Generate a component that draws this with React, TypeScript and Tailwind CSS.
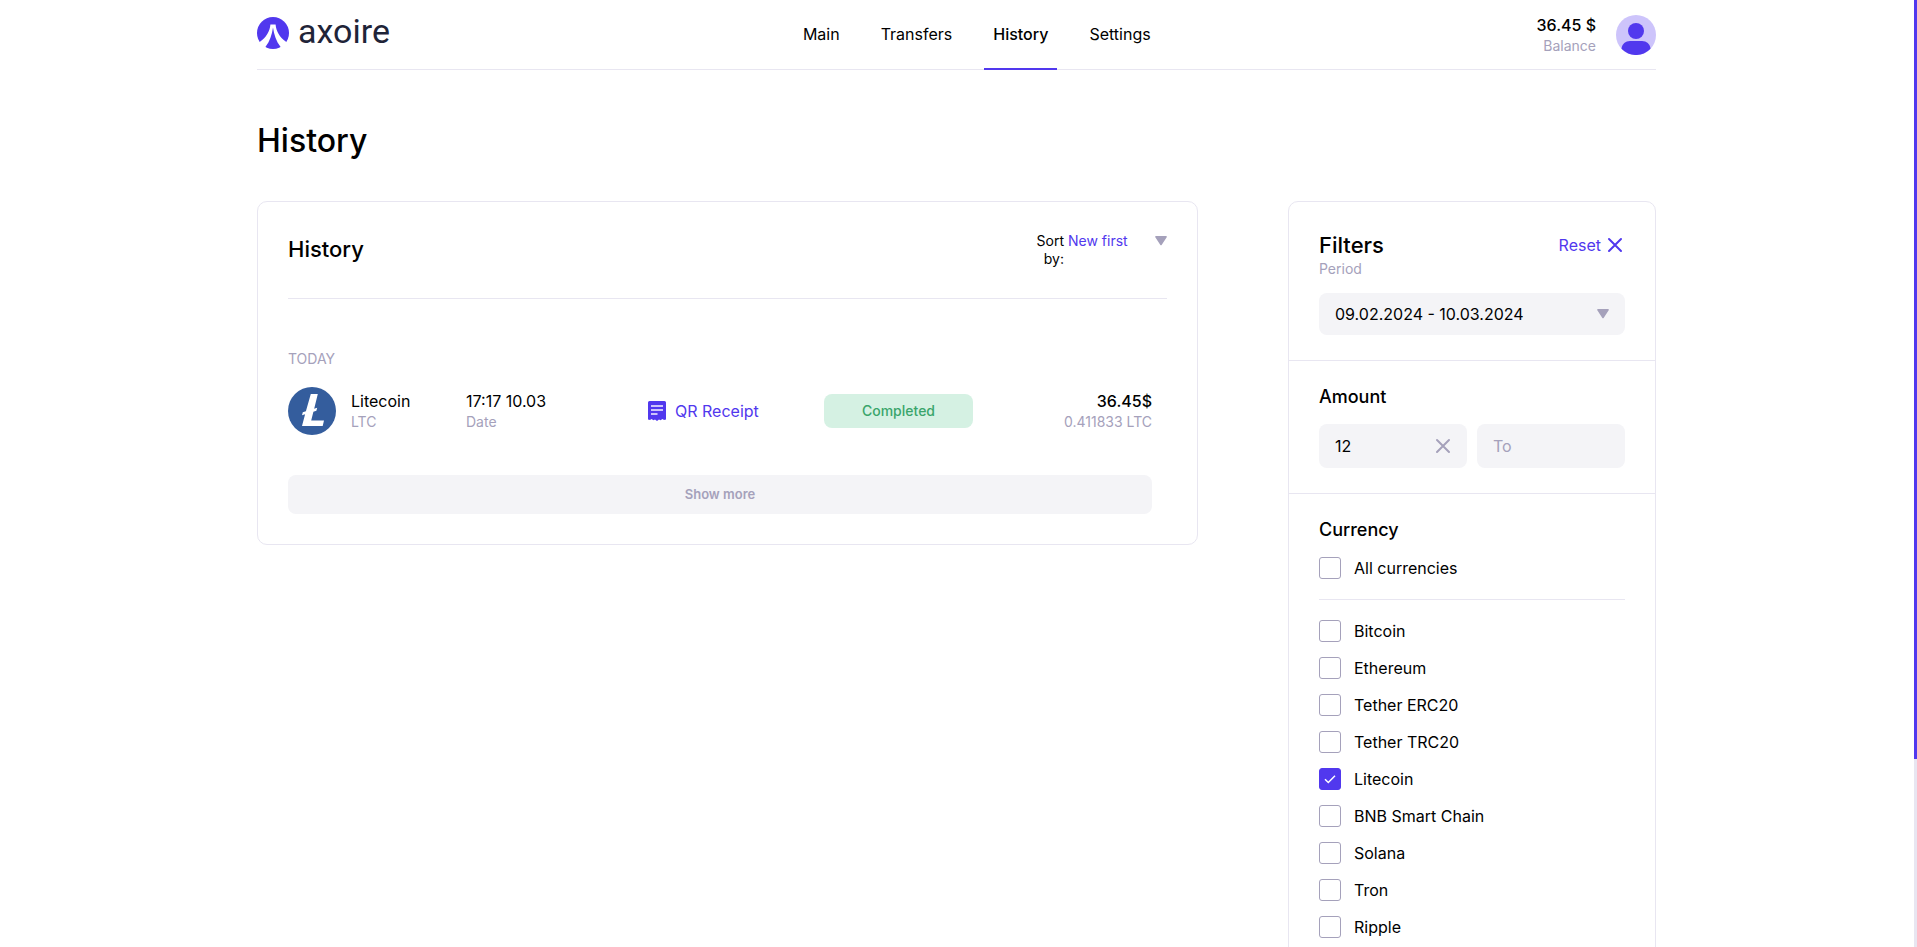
import { useEffect, useRef, useState } from "react";

const NAV = ["Main", "Transfers", "History", "Settings"];

const CURRENCIES = [
  "Bitcoin",
  "Ethereum",
  "Tether ERC20",
  "Tether TRC20",
  "Litecoin",
  "BNB Smart Chain",
  "Solana",
  "Tron",
  "Ripple",
];

function LogoMark() {
  return (
    <svg viewBox="0 0 32 32" className="size-8" aria-hidden="true">
      <circle cx="16" cy="16" r="16" fill="#5138ee" />
      <path
        d="M13.400 7.500h5.200c.5 6.500 4.200 13.300 10.400 17.200l1.500 1.500-6 4.800-1.200-1.600c-4-5-6.300-11.500-7.300-18.900-1 7.400-3.300 13.900-7.300 18.900l-1.200 1.600-6-4.800 1.500-1.500c6.200-3.900 9.900-10.700 10.400-17.200z"
        fill="#fff"
      />
    </svg>
  );
}

function Avatar() {
  return (
    <svg viewBox="0 0 40 40" className="size-10" aria-hidden="true">
      <circle cx="20" cy="20" r="20" fill="#cdc4fb" />
      <circle cx="20" cy="16" r="8" fill="#5138ee" />
      <path d="M5.500 33.800C6 29 9.500 26 14 26h12c4.500 0 8 3 8.500 7.800A20 20 0 0 1 5.500 33.800z" fill="#5138ee" />
    </svg>
  );
}

function LitecoinIcon() {
  return (
    <svg viewBox="0 0 48 48" className="size-12 shrink-0" aria-hidden="true">
      <circle cx="24" cy="24" r="24" fill="#345d9d" />
      <path
        d="M22.800 7h7l-3.600 14.700 3-1-.8 3-3 1.100L23.200 33.500h12.800L34.700 39H14l3.100-11.800-3.100 1.100.8-3 3.100-1.100z"
        fill="#fff"
      />
    </svg>
  );
}

function ReceiptIcon() {
  return (
    <svg viewBox="0 0 18 20" className="h-5 w-[18px]" aria-hidden="true">
      <path
        d="M1.500 0h15A1.500 1.500 0 0 1 18 1.500V18.500l-2 .5-1.500-1-2 1.200-1.500-.7-2 1.500-2-1.500-1.500.7-2-1.200-1.500 1-2-.5V1.500A1.500 1.500 0 0 1 1.500 0z"
        fill="#5138ee"
      />
      <path d="M3 5h12M3 9h12M3 13h6.500" stroke="#cdc4fb" strokeWidth="2" />
    </svg>
  );
}

function Triangle() {
  return (
    <svg viewBox="0 0 12 10" className="pointer-events-none h-[10px] w-3 shrink-0" aria-hidden="true">
      <path d="M1 0h10a.8.800 0 0 1 .7 1.300L6.800 8.700a1 1 0 0 1-1.600 0L.3 1.300A.8.800 0 0 1 1 0z" fill="#a5a1bb" />
    </svg>
  );
}

function Cross() {
  return (
    <svg viewBox="0 0 16 16" className="size-4 shrink-0" fill="none" stroke="currentColor" strokeWidth="2" strokeLinecap="round" aria-hidden="true">
      <path d="M2 2l12 12M14 2L2 14" />
    </svg>
  );
}

function Check({ label, defaultChecked = false }: { label: string; defaultChecked?: boolean }) {
  return (
    <label className="flex items-center gap-[13px] text-base leading-[22px]">
      <span className="grid size-[22px] shrink-0">
        <input
          type="checkbox"
          defaultChecked={defaultChecked}
          className="peer col-start-1 row-start-1 m-0 size-[22px] appearance-none rounded-[3px] border border-[#a5a1bb] bg-white checked:border-[#5138ee] checked:bg-[#5138ee]"
        />
        <svg
          viewBox="0 0 22 22"
          className="pointer-events-none invisible col-start-1 row-start-1 size-[22px] peer-checked:visible"
          fill="none"
          stroke="#fff"
          strokeWidth="1.500"
          aria-hidden="true"
        >
          <path d="M6 11.200l3.300 3.300L16 7.800" />
        </svg>
      </span>
      {label}
    </label>
  );
}

export default function App() {
  const scroller = useRef<HTMLDivElement>(null);
  const [thumb, setThumb] = useState({ top: 0, height: 80 });

  const measure = () => {
    const el = scroller.current;
    if (!el) return;
    setThumb({
      top: (el.scrollTop / el.scrollHeight) * 100,
      height: (el.clientHeight / el.scrollHeight) * 100,
    });
  };

  useEffect(() => {
    measure();
    window.addEventListener("resize", measure);
    return () => window.removeEventListener("resize", measure);
  }, []);

  return (
    <div className="flex h-screen bg-white font-['Inter',sans-serif] text-base text-black">
      <div ref={scroller} onScroll={measure} className="min-w-0 flex-1 overflow-y-auto [scrollbar-width:none]">
        <div className="mx-auto max-w-[1400px] pr-px pb-[212px]">
          <header className="flex h-[70px] justify-between border-b border-[#e8e6f1]">
            <a href="#" className="flex w-40 items-start gap-[9px] pt-[17px]">
              <LogoMark />
              <span className="font-['Roboto',sans-serif] text-[34px] leading-7 text-[#1f2438]">axoire</span>
            </a>
            <nav className="-mb-px flex gap-[23px]">
              {NAV.map((item) => (
                <a
                  key={item}
                  href="#"
                  className={
                    item === "History"
                      ? "border-b-2 border-[#5138ee] px-[9px] pt-[22px] leading-6 font-medium"
                      : "px-[9px] pt-[22px] leading-6"
                  }
                >
                  {item}
                </a>
              ))}
            </nav>
            <div className="flex items-center gap-5">
              <div className="text-right">
                <div className="leading-[22px] font-medium">36.45 $</div>
                <div className="text-sm leading-5 text-[#a5a1bb]">Balance</div>
              </div>
              <Avatar />
            </div>
          </header>

          <h1 className="mt-[51px] text-[32px] leading-10 font-medium">History</h1>

          <div className="mt-10 flex items-start gap-[90px]">
            <main className="min-w-0 flex-1 rounded-[10px] border border-[#e8e6f1] p-[30px]">
              <div className="flex h-[67px] items-start justify-between border-b border-[#e8e6f1]">
                <h2 className="pt-[3px] text-[22px] leading-7 font-medium">History</h2>
                <div className="flex items-start gap-1 text-sm leading-[18px]">
                  <label htmlFor="sort" className="w-9 text-right">
                    Sort by:
                  </label>
                  <div className="flex items-center">
                    <select id="sort" className="h-[18px] w-[87px] appearance-none bg-transparent p-0 leading-[18px] text-[#5138ee]">
                      <option>New first</option>
                    </select>
                    <Triangle />
                  </div>
                </div>
              </div>

              <section className="pt-[50px] pr-[15px]">
                <h3 className="text-sm leading-5 text-[#a5a1bb]">TODAY</h3>
                <div className="mt-[18px] grid grid-cols-[178px_182px_176px_149px_1fr] items-center">
                  <div className="flex items-center gap-[15px]">
                    <LitecoinIcon />
                    <div>
                      <div className="leading-[22px]">Litecoin</div>
                      <div className="text-sm leading-5 text-[#a5a1bb]">LTC</div>
                    </div>
                  </div>
                  <div>
                    <div className="leading-[22px]">17:17 10.03</div>
                    <div className="text-sm leading-5 text-[#a5a1bb]">Date</div>
                  </div>
                  <a href="#" className="flex items-center gap-[9px] text-[#5138ee]">
                    <ReceiptIcon />
                    QR Receipt
                  </a>
                  <div className="rounded-lg bg-[#d5f1e3] text-center text-sm leading-[34px] font-medium text-[#3aa56b]">Completed</div>
                  <div className="text-right">
                    <div className="leading-[22px] font-medium">36.45$</div>
                    <div className="text-sm leading-5 text-[#a5a1bb]">0.411833 LTC</div>
                  </div>
                </div>
                <button type="button" className="mt-10 block h-[39px] w-full rounded-lg bg-[#f4f4f7] text-[13px] font-semibold text-[#a5a1bb]">
                  Show more
                </button>
              </section>
            </main>

            <aside className="w-[368px] shrink-0 rounded-[10px] border border-[#e8e6f1]">
              <div className="border-b border-[#e8e6f1] px-[30px] pt-[29px] pb-[25px]">
                <div className="flex items-center justify-between">
                  <h2 className="text-[22px] leading-7 font-medium">Filters</h2>
                  <button type="button" className="flex items-center gap-[6px] pr-[2px] text-[#5138ee]">
                    Reset
                    <Cross />
                  </button>
                </div>
                <label htmlFor="period" className="block text-sm leading-5 text-[#a5a1bb]">
                  Period
                </label>
                <div className="mt-[14px] flex h-[42px] items-center rounded-lg bg-[#f4f4f7] px-4">
                  <select id="period" className="w-full min-w-0 flex-1 appearance-none bg-transparent leading-6">
                    <option>09.02.2024 - 10.03.2024</option>
                  </select>
                  <Triangle />
                </div>
              </div>

              <div className="border-b border-[#e8e6f1] px-[30px] pt-6 pb-[25px]">
                <h3 className="text-lg leading-6 font-medium">Amount</h3>
                <div className="mt-[15px] flex gap-[10px]">
                  <div className="flex h-11 min-w-0 flex-1 items-center rounded-lg bg-[#f4f4f7] px-4">
                    <input aria-label="From" defaultValue="12" className="w-full min-w-0 flex-1 bg-transparent outline-none" />
                    <button type="button" aria-label="Clear" className="text-[#a5a1bb]">
                      <Cross />
                    </button>
                  </div>
                  <input
                    aria-label="To"
                    placeholder="To"
                    className="h-11 min-w-0 flex-1 rounded-lg bg-[#f4f4f7] px-4 outline-none placeholder:text-[#a5a1bb]"
                  />
                </div>
              </div>

              <div className="px-[30px] pt-6 pb-[30px]">
                <h3 className="text-lg leading-6 font-medium">Currency</h3>
                <div className="mt-[15px] border-b border-[#e8e6f1] pb-5">
                  <Check label="All currencies" />
                </div>
                <div className="flex flex-col gap-[15px] pt-5">
                  {CURRENCIES.map((name) => (
                    <Check key={name} label={name} defaultChecked={name === "Litecoin"} />
                  ))}
                </div>
              </div>
            </aside>
          </div>
        </div>
      </div>
      <div className="w-[3px] shrink-0 bg-[#e8e6f1]" aria-hidden="true">
        <div className="relative w-full bg-[#5138ee]" style={{ top: `${thumb.top}%`, height: `${thumb.height}%` }} />
      </div>
    </div>
  );
}
